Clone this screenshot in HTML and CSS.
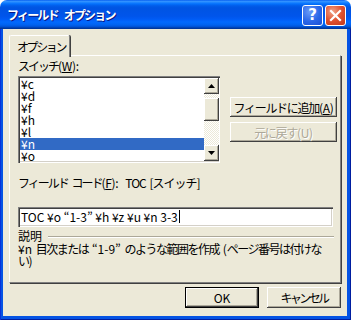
FILE: index.html
```html
<!DOCTYPE html>
<html lang="ja">
<head>
<meta charset="utf-8">
<link rel="stylesheet" href="styles.css">
</head>
<body>
<div class="win">
  <div class="title">
    <span class="title-text">フィールド オプション</span>
    <div class="title-btns">
      <span class="tb help">?</span>
      <span class="tb close"><svg width="13" height="13" viewBox="0 0 13 13"><path d="M2 2 L11 11 M11 2 L2 11" stroke="#fff" stroke-width="2.2" stroke-linecap="square"/></svg></span>
    </div>
  </div>
  <div class="frame">
    <div class="client">
      <div class="tabs"><div class="tab">オプション</div></div>
      <div class="panel">
        <div class="label">スイッチ<span class="a">(<u>W</u>):</span></div>
        <div class="row">
          <div class="list">
            <ul class="items">
              <li>¥c</li>
              <li>¥d</li>
              <li>¥f</li>
              <li>¥h</li>
              <li>¥l</li>
              <li class="sel">¥n</li>
              <li>¥o</li>
            </ul>
            <div class="sb">
              <div class="sb-btn"><svg width="7" height="4" viewBox="0 0 7 4"><path d="M3.5 0 L7 4 L0 4 Z" fill="#000"/></svg></div>
              <div class="sb-track">
                <div class="sb-thumb"></div>
              </div>
              <div class="sb-btn"><svg width="7" height="4" viewBox="0 0 7 4"><path d="M0 0 L7 0 L3.5 4 Z" fill="#000"/></svg></div>
            </div>
          </div>
          <div class="side">
            <div class="btn">フィールドに追加<span class="a">(<u>A</u>)</span></div>
            <div class="btn disabled">元に戻す<span class="a">(U)</span></div>
          </div>
        </div>
        <div class="code"><span class="code-label">フィールド コード<span class="a">(<u>F</u>):</span></span><span class="code-val">TOC [スイッチ]</span></div>
        <div class="input">TOC ¥o “1-3” ¥h ¥z ¥u ¥n 3-3<span class="caret"></span></div>
        <div class="desc-head"><span>説明</span><span class="rule"></span></div>
        <div class="desc"><span class="a">¥n </span>目次または<span class="a"> “1-9” </span>のような範囲を作成<span class="a"> (</span>ページ番号は付けな<br>い<span class="a">)</span></div>
      </div>
      <div class="footer">
        <div class="btn fbtn default">OK</div>
        <div class="btn fbtn cancel">キャンセル</div>
      </div>
    </div>
  </div>
</div>
</body>
</html>
```
FILE: styles.css
```css
* { box-sizing: border-box; }
html, body { margin: 0; padding: 0; }
body {
  width: 351px;
  height: 320px;
  overflow: hidden;
  font-family: "Noto Sans CJK JP", "Noto Sans", sans-serif;
  font-size: 12px;
  color: #000;
  white-space: nowrap;
}
.a { letter-spacing: -0.3px; word-spacing: 0; }
.win {
  width: 351px;
  height: 320px;
  display: flex;
  flex-direction: column;
}
.title {
  height: 29px;
  flex: none;
  display: flex;
  align-items: center;
  justify-content: space-between;
  padding: 0 5px 0 7px;
  border-radius: 7px 7px 0 0;
  background: linear-gradient(to bottom, #0058ee 0%, #3593ff 4%, #288eff 7%, #127dff 10%, #036ffc 14%, #0262ee 18%, #0057e5 24%, #0054e3 30%, #0055eb 56%, #005bf5 66%, #026afe 76%, #0062ef 86%, #0052d6 92%, #0040ab 96%, #003092 100%);
}
.title-text {
  color: #fff;
  font-weight: bold;
  font-size: 12px;
  line-height: 16px;
  letter-spacing: -1.8px;
  word-spacing: 5px;
  text-shadow: 1px 1px 0 #0a1883;
}
.title-btns {
  display: flex;
  gap: 2px;
  margin-top: 1px;
}
.tb {
  width: 21px;
  height: 21px;
  border: 1px solid #fff;
  border-radius: 3px;
  display: flex;
  align-items: center;
  justify-content: center;
  color: #fff;
  font-family: "DejaVu Sans", sans-serif;
  font-weight: bold;
  font-size: 15px;
}
.help {
  background: radial-gradient(circle at 35% 30%, #6b9cf8 0%, #2a66e8 55%, #1a4fd4 100%);
}
.close {
  background: radial-gradient(circle at 35% 30%, #f0a48a 0%, #e0512f 50%, #c1381a 100%);
}
.frame {
  flex: 1;
  display: flex;
  padding: 0 4px 4px 3px;
  background: #0553e4;
  box-shadow: inset 1px 0 #0831d9, inset -1px 0 #001ea0, inset 0 -1px #001ea0;
}
.client {
  flex: 1;
  background: #ece9d8;
  padding: 6px 6px 0 6px;
  display: flex;
  flex-direction: column;
}
.tabs {
  display: flex;
  height: 21px;
  position: relative;
  z-index: 1;
  margin-bottom: -1px;
}
.tab {
  width: 61px;
  height: 22px;
  padding: 3px 0 0 7px;
  line-height: 15px;
  letter-spacing: -2.4px;
  background: #ece9d8;
  border-top: 1px solid #fff;
  border-left: 1px solid #fff;
  border-right: 1px solid #808080;
  box-shadow: 1px 0 0 #404040;
  border-radius: 2px 2px 0 0;
}
.panel {
  width: 332px;
  height: 228px;
  border-top: 1px solid #fff;
  border-left: 1px solid #fff;
  border-right: 1px solid #808080;
  border-bottom: 1px solid #808080;
  box-shadow: 1px 1px 0 #404040;
  padding: 3px 0 0 8px;
}
.label { line-height: 14px; height: 14px; letter-spacing: -2px; }
u { text-decoration: underline; text-underline-offset: 1px; }
.row {
  display: flex;
  align-items: flex-start;
  margin-top: 3px;
}
.list {
  width: 202px;
  height: 87px;
  background: #fff;
  padding: 2px 1px 1px 2px;
  display: flex;
  box-shadow: inset 1px 1px #808080, inset 2px 2px #404040, inset -1px -1px #fff, inset -2px -2px #d4d0c8;
}
.items {
  list-style: none;
  margin: 0;
  padding: 0;
  flex: 1;
}
.items li {
  height: 12px;
  line-height: 12px;
  padding-left: 1px;
}
.items li.sel {
  background: #316ac5;
  color: #fff;
}
.sb {
  width: 15px;
  display: flex;
  flex-direction: column;
  height: 83px;
}
.sb-btn {
  height: 16px;
  flex: none;
  background: #ece9d8;
  display: flex;
  align-items: center;
  justify-content: center;
  box-shadow: inset -1px -1px #404040, inset 1px 1px #fff, inset -2px -2px #aca899;
}
.sb-track {
  flex: 1;
  background: repeating-conic-gradient(#fff 0 25%, #ece9d8 0 50%) 0 0 / 2px 2px;
  padding-top: 4px;
}
.sb-thumb {
  height: 23px;
  background: #ece9d8;
  box-shadow: inset -1px -1px #404040, inset 1px 1px #fff, inset -2px -2px #aca899;
}
.side {
  margin-left: 10px;
  margin-top: 21px;
  display: flex;
  flex-direction: column;
  gap: 5px;
}
.btn {
  background: #ece9d8;
  display: flex;
  align-items: center;
  justify-content: center;
  line-height: 13px;
  box-shadow: inset -1px -1px #404040, inset 1px 1px #fff, inset -2px -2px #aca899;
}
.side .btn {
  width: 107px;
  height: 20px;
  padding-top: 1px;
  letter-spacing: -1.3px;
}
.btn.disabled {
  color: #aca899;
  text-shadow: 1px 1px 0 #fff;
}
.code {
  margin-top: 13px;
  line-height: 13px;
  height: 13px;
  display: flex;
}
.code-label { letter-spacing: -2px; word-spacing: 3px; }
.code-val { margin-left: 7px; letter-spacing: -1px; word-spacing: 2px; }
.input {
  margin-top: 18px;
  width: 315px;
  height: 20px;
  background: #fff;
  padding: 3px 0 0 3px;
  line-height: 13px;
  display: flex;
  align-items: flex-start;
  box-shadow: inset 1px 1px #808080, inset 2px 2px #404040, inset -1px -1px #fff, inset -2px -2px #d4d0c8;
}
.caret {
  width: 1px;
  height: 13px;
  background: #000;
  margin-left: 1px;
}
.desc-head {
  margin-top: 2px;
  display: flex;
  align-items: center;
  gap: 6px;
  line-height: 13px;
  height: 13px;
  width: 316px;
}
.rule {
  flex: 1;
  height: 2px;
  border-top: 1px solid #aca899;
  border-bottom: 1px solid #fff;
  margin-top: 2px;
}
.desc {
  line-height: 12px;
  margin-top: 1px;
  letter-spacing: -1.5px;
}
.desc .a { letter-spacing: 0; word-spacing: 1px; }
.footer {
  display: flex;
  justify-content: flex-end;
  gap: 8px;
  margin-top: 4px;
}
.fbtn {
  width: 74px;
  height: 21px;
}
.fbtn.cancel { letter-spacing: -2.6px; }
.fbtn.default {
  box-shadow: inset 0 0 0 1px #000, inset -2px -2px #404040, inset 2px 2px #fff, inset -3px -3px #aca899;
}
```
